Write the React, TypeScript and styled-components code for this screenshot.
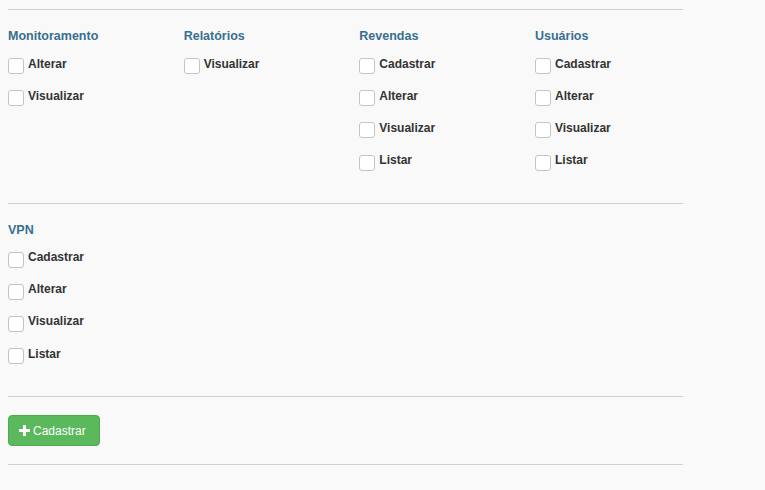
import React from 'react';
import styled, { createGlobalStyle } from 'styled-components';

const GlobalStyle = createGlobalStyle`
  body {
    margin: 8px;
    background: #f9f9f9;
    font-family: "Liberation Sans", Arial, sans-serif;
    color: #333;
  }
`;

const Page = styled.div`
  width: 675px;
  display: flex;
  flex-direction: column;
`;

const Divider = styled.div<{ $top: number }>`
  height: 1px;
  background: #cfcfcf;
  margin-top: ${props => props.$top}px;
`;

const Grid = styled.div`
  display: grid;
  grid-template-columns: repeat(4, 175.67px);
  margin-top: 18px;
  align-items: start;
`;

const Group = styled.div`
  display: flex;
  flex-direction: column;
`;

const Heading = styled.h4`
  margin: 0 0 10px;
  font-size: 12.5px;
  line-height: 16px;
  font-weight: bold;
  color: #386f90;
`;

const CheckRow = styled.label`
  display: flex;
  align-items: flex-start;
  height: 20px;
  margin-bottom: 12.2px;
  cursor: pointer;

  &:last-child {
    margin-bottom: 0;
  }
`;

const Box = styled.input.attrs({ type: 'checkbox' })`
  appearance: none;
  width: 16px;
  height: 16px;
  margin: 4px 4px 0 0;
  border: 1px solid #c4c4c4;
  border-radius: 3px;
  background: #fff;
  flex-shrink: 0;
`;

const CheckText = styled.span`
  margin-top: 1.5px;
  font-size: 12px;
  line-height: 16px;
  font-weight: bold;
  color: #333;
`;

const ButtonBar = styled.div`
  margin-top: 18px;
  display: flex;
`;

const SuccessButton = styled.button`
  display: flex;
  align-items: center;
  gap: 3px;
  height: 31px;
  padding: 0 13px 0 10px;
  background: #5cb85c;
  border: 1px solid #4cae4c;
  border-radius: 4px;
  color: #fff;
  font-family: "Liberation Sans", Arial, sans-serif;
  font-size: 12px;
  cursor: pointer;
`;

interface GroupDef {
  title: string;
  actions: string[];
}

const sections: GroupDef[][] = [
  [
    { title: 'Monitoramento', actions: ['Alterar', 'Visualizar'] },
    { title: 'Relatórios', actions: ['Visualizar'] },
    { title: 'Revendas', actions: ['Cadastrar', 'Alterar', 'Visualizar', 'Listar'] },
    { title: 'Usuários', actions: ['Cadastrar', 'Alterar', 'Visualizar', 'Listar'] },
  ],
  [
    { title: 'VPN', actions: ['Cadastrar', 'Alterar', 'Visualizar', 'Listar'] },
  ],
];

function PlusIcon() {
  return (
    <svg width="11" height="11" viewBox="0 0 11 11">
      <path d="M4 0h3v4h4v3H7v4H4V7H0V4h4z" fill="#fff" />
    </svg>
  );
}

export default function App() {
  return (
    <>
      <GlobalStyle />
      <Page>
        <Divider $top={1} />
        {sections.map((groups, i) => (
          <React.Fragment key={i}>
            <Grid>
              {groups.map(g => (
                <Group key={g.title}>
                  <Heading>{g.title}</Heading>
                  {g.actions.map(a => (
                    <CheckRow key={a}>
                      <Box />
                      <CheckText>{a}</CheckText>
                    </CheckRow>
                  ))}
                </Group>
              ))}
            </Grid>
            <Divider $top={32} />
          </React.Fragment>
        ))}
        <ButtonBar>
          <SuccessButton>
            <PlusIcon />
            Cadastrar
          </SuccessButton>
        </ButtonBar>
        <Divider $top={18} />
      </Page>
    </>
  );
}
